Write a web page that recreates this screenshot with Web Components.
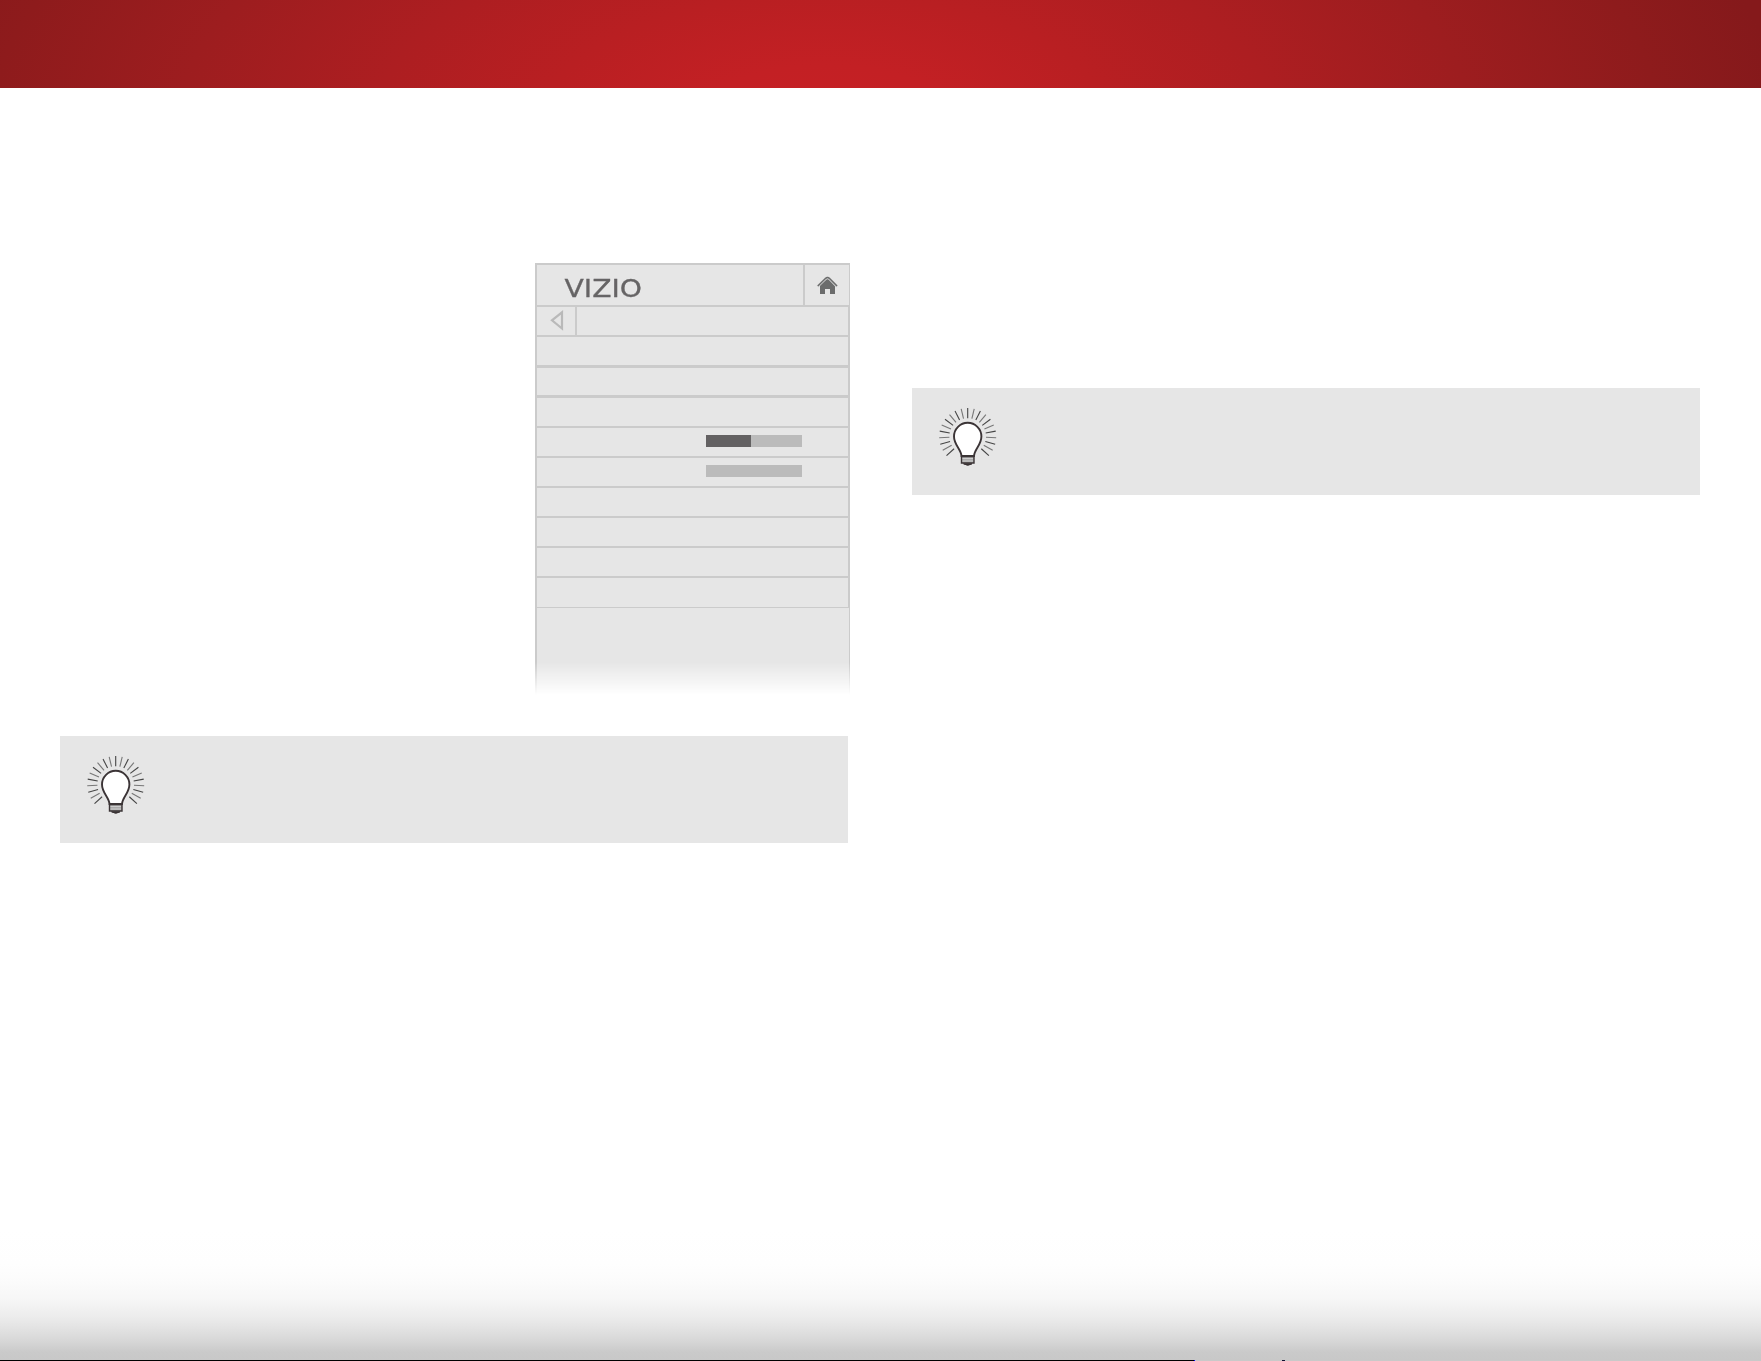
<!DOCTYPE html>
<html lang="en">
<head>
<meta charset="utf-8">
<title>VIZIO</title>
<style>
  html, body { margin: 0; background: #fff; }
  body { font-family: "DejaVu Sans", sans-serif; }
  .left { padding-left: 60px; }
  .left settings-menu { margin: 175px 0 41px 475px; }
  .right { padding: 300px 0 0 64px; }
</style>
</head>
<body>
<manual-page>
  <div class="left">
    <settings-menu>
      <menu-row size="28" line="3"></menu-row>
      <menu-row size="27" line="3"></menu-row>
      <menu-row size="28"></menu-row>
      <menu-row size="28"><level-bar value="45"></level-bar></menu-row>
      <menu-row size="28"><level-bar value="0"></level-bar></menu-row>
      <menu-row size="28"></menu-row>
      <menu-row size="28"></menu-row>
      <menu-row size="28"></menu-row>
      <menu-row size="29" line="1"></menu-row>
    </settings-menu>
    <tip-box></tip-box>
  </div>
  <div class="right">
    <tip-box></tip-box>
  </div>
</manual-page>

<script>
class ManualPage extends HTMLElement {
  constructor() {
    super();
    this.attachShadow({ mode: "open" });
    this.shadowRoot.innerHTML = `
      <style>
        :host { display: flex; flex-direction: column; width: 1761px; height: 1361px; overflow: hidden; }
        header {
          flex: none;
          height: 88px;
          background: radial-gradient(1040px 460px at 825px 120px, #c62025 0%, #c32024 12%, #b91f22 27%, #ad1e21 43%, #9d1d1f 62%, #8e1b1c 80%, #85191b 92%);
        }
        main { display: grid; grid-template-columns: 848px 1fr; flex: 1; align-items: start; }
        footer {
          flex: none;
          height: 130px;
          background: linear-gradient(#fff 0, #fefefe 34px, #fbfbfb 52px, #f6f6f6 70px, #ececec 87px, #e0e0e0 101px, #d6d6d6 112px, #cacaca 122px, #c8c8c8 130px);
        }
        /* thin rule on the last pixel row */
        .edge { display: flex; flex: none; height: 1px; background: #c9c9c9; }
        .edge i { width: 1194px; background: #000; }
        .edge i + i { width: 1px; background: #00f; }
        .edge b { width: 3px; margin-left: 87px; background: #113; }
      </style>
      <header></header>
      <main><slot></slot></main>
      <footer></footer>
      <div class="edge"><i></i><i></i><b></b></div>
    `;
  }
}

class SettingsMenu extends HTMLElement {
  constructor() {
    super();
    this.attachShadow({ mode: "open" });
    this.shadowRoot.innerHTML = `
      <style>
        :host {
          display: block;
          box-sizing: border-box;
          width: 315px;
          height: 432px;
          border: solid #cbcbcb;
          border-width: 2px 1px 0 2px;
          background: #e6e6e6;
          -webkit-mask-image: linear-gradient(#000 399px, transparent 432px);
          mask-image: linear-gradient(#000 399px, transparent 432px);
        }
        .top, .nav { display: flex; border-bottom: 2px solid #cbcbcb; }
        .top { height: 40px; }
        .nav { height: 28px; border-right: 1px solid #cbcbcb; }
        .brand { flex: 1; }
        .home { width: 44px; border-left: 2px solid #cbcbcb; }
        .back { width: 38px; border-right: 2px solid #cbcbcb; }
        svg { display: block; }
        text { font: 24.7px "DejaVu Sans", sans-serif; fill: #666465; stroke: #666465; stroke-width: .3; }
      </style>
      <div class="top">
        <div class="brand">
          <svg width="140" height="40"><text x="27.5" y="32" textLength="77.500" lengthAdjust="spacingAndGlyphs">VIZIO</text></svg>
        </div>
        <div class="home">
          <svg width="44" height="40" viewBox="0 0 44 40">
            <path d="M15 20 22.500 13.500 30 20V29h-5v-5h-5v5H15z" fill="#6b6c6c"/>
            <path d="M12.500 21.500 20.500 13.600q2-1.600 4 0L32 21.500" fill="none" stroke="#d5d5d5" stroke-width="2.600"/>
            <path d="M12.800 21 20.700 13.300q1.800-1.500 3.600 0L32 21" fill="none" stroke="#6b6c6c" stroke-width="1.500"/>
          </svg>
        </div>
      </div>
      <div class="nav">
        <div class="back">
          <svg width="38" height="28" viewBox="0 0 38 28">
            <path d="M25 5.300v16.200L15 13.300z" fill="none" stroke="#b9b9b9" stroke-width="2.200"/>
          </svg>
        </div>
      </div>
      <slot></slot>
    `;
  }
}

class MenuRow extends HTMLElement {
  constructor() {
    super();
    this.attachShadow({ mode: "open" });
    const size = this.getAttribute("size");
    const line = this.getAttribute("line") || 2;
    this.shadowRoot.innerHTML = `
      <style>
        :host {
          display: flex;
          justify-content: flex-end;
          align-items: flex-start;
          box-sizing: content-box;
          height: ${size}px;
          border-right: 1px solid #cbcbcb;
          border-bottom: ${line}px solid #cbcbcb;
        }
        ::slotted(level-bar) { margin: 7px 46px 0 0; }
      </style>
      <slot></slot>
    `;
  }
}

class LevelBar extends HTMLElement {
  constructor() {
    super();
    this.attachShadow({ mode: "open" });
    this.shadowRoot.innerHTML = `
      <style>
        :host { display: block; width: 96px; height: 12px; background: #bbb; }
        div { width: ${this.getAttribute("value")}px; height: 100%; background: #636162; }
      </style>
      <div></div>
    `;
  }
}

class TipBox extends HTMLElement {
  constructor() {
    super();
    this.attachShadow({ mode: "open" });

    // rays fan out around the bulb, open at the bottom
    let rays = "";
    for (let i = 0; i < 21; i++) {
      const angle = -132 + i * 13.2;
      rays += `<path d="M30.700-18.300V-28.500" transform="translate(0 29.500) rotate(${angle} 30.700 0)" stroke="${i % 2 ? "#777" : "#444"}"/>`;
    }

    this.shadowRoot.innerHTML = `
      <style>
        :host {
          display: flex;
          box-sizing: border-box;
          width: 788px;
          height: 107px;
          padding: 19px 0 0 25px;
          background: #e6e6e6;
        }
        svg { flex: none; }
      </style>
      <svg width="62" height="62" viewBox="0 0 62 62" fill="none">
        <g stroke-width="1.100">${rays}</g>
        <path d="M24.500 49C24 42 17 38 17 29.500a13.700 13.700 0 0 1 27.400 0C44.400 38 37.500 42 37 49z" fill="#fff" stroke="#3b3436" stroke-width="1.900"/>
        <path d="M24.500 49.500h12.500v6.500H24.500z" fill="#aaa" stroke="#3b3436" stroke-width="1.400"/>
        <path d="M25.500 51.500h10.500M25.500 54h10.500" stroke="#ddd" stroke-width=".7"/>
        <path d="M26.500 56.800h8.500q-4.200 3-8.500 0z" fill="#3b3436" stroke="#3b3436"/>
      </svg>
      <slot></slot>
    `;
  }
}

customElements.define("manual-page", ManualPage);
customElements.define("settings-menu", SettingsMenu);
customElements.define("menu-row", MenuRow);
customElements.define("level-bar", LevelBar);
customElements.define("tip-box", TipBox);
</script>
</body>
</html>
